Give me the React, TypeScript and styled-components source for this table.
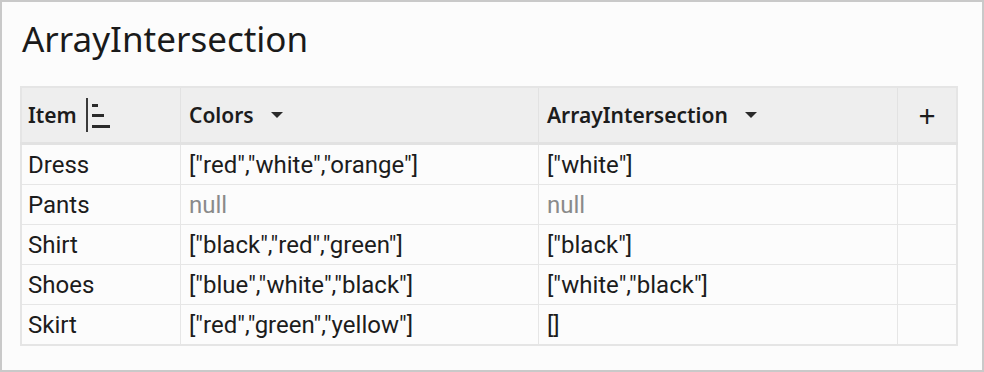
import styled, { createGlobalStyle } from "styled-components";

const Global = createGlobalStyle`
  html, body {
    margin: 0;
    padding: 0;
    background: #ffffff;
  }
`;

const Frame = styled.div`
  box-sizing: border-box;
  width: 984px;
  height: 372px;
  border: 2px solid #c9c9c9;
  background: #fcfcfc;
  padding: 14px 25px 0 18px;
`;

const Title = styled.h1`
  margin: 0 0 24px 2px;
  font-family: "Noto Sans", sans-serif;
  font-weight: 400;
  font-size: 35px;
  line-height: 46px;
  color: #1a1a1a;
`;

const Table = styled.table`
  border-collapse: collapse;
  width: 937px;
  border: 2px solid #e5e5e5;
  table-layout: fixed;
`;

const Head = styled.th<{ $w: number }>`
  width: ${(p) => p.$w}px;
  height: 54px;
  padding: 0 0 0 8px;
  background: #eeeeee;
  border-left: 1px solid #e2e2e2;
  border-bottom: 3px solid #e2e2e2;
  text-align: left;
  font-family: "Noto Sans", sans-serif;
  font-weight: 600;
  font-size: 21px;
  color: #1c1c1c;
  &:first-child {
    border-left: none;
    padding-left: 6px;
  }
`;

const HeadInner = styled.div<{ $gap: number }>`
  display: flex;
  align-items: center;
  gap: ${(p) => p.$gap}px;
`;

const Cell = styled.td<{ $muted?: boolean }>`
  height: 39px;
  padding: 0 0 0 8px;
  border-left: 1px solid #e6e6e6;
  border-top: 1px solid #e6e6e6;
  font-family: Roboto, sans-serif;
  font-size: 24px;
  color: ${(p) => (p.$muted ? "#8a8a8a" : "#1c1c1c")};
  white-space: nowrap;
  &:first-child {
    border-left: none;
    padding-left: 6px;
  }
`;

const PlusHead = styled(Head)`
  padding: 0;
  text-align: center;
  font-weight: 400;
  font-size: 30px;
`;

const SortIcon = () => (
  <svg width="26" height="34" viewBox="0 0 26 34">
    <rect x="0" y="0" width="2" height="34" fill="#3a3a3a" />
    <rect x="6" y="6" width="6" height="3" fill="#2a2a2a" />
    <rect x="6" y="16" width="12" height="3" fill="#2a2a2a" />
    <rect x="6" y="27" width="18" height="3" fill="#2a2a2a" />
  </svg>
);

const Caret = () => (
  <svg width="12" height="7" viewBox="0 0 12 7">
    <path d="M0 0 L12 0 L6 6 Z" fill="#2a2a2a" />
  </svg>
);

const rows: [string, string | null, string | null][] = [
  ["Dress", '["red","white","orange"]', '["white"]'],
  ["Pants", null, null],
  ["Shirt", '["black","red","green"]', '["black"]'],
  ["Shoes", '["blue","white","black"]', '["white","black"]'],
  ["Skirt", '["red","green","yellow"]', "[]"],
];

export default function App() {
  return (
    <>
      <Global />
      <Frame>
        <Title>ArrayIntersection</Title>
        <Table>
          <thead>
            <tr>
              <Head $w={152}>
                <HeadInner $gap={9}>
                  <span>Item</span>
                  <SortIcon />
                </HeadInner>
              </Head>
              <Head $w={349}>
                <HeadInner $gap={17}>
                  <span>Colors</span>
                  <Caret />
                </HeadInner>
              </Head>
              <Head $w={350}>
                <HeadInner $gap={17}>
                  <span>ArrayIntersection</span>
                  <Caret />
                </HeadInner>
              </Head>
              <PlusHead $w={58}>+</PlusHead>
            </tr>
          </thead>
          <tbody>
            {rows.map(([item, colors, inter]) => (
              <tr key={item}>
                <Cell>{item}</Cell>
                <Cell $muted={colors === null}>{colors ?? "null"}</Cell>
                <Cell $muted={inter === null}>{inter ?? "null"}</Cell>
                <Cell />
              </tr>
            ))}
          </tbody>
        </Table>
      </Frame>
    </>
  );
}
